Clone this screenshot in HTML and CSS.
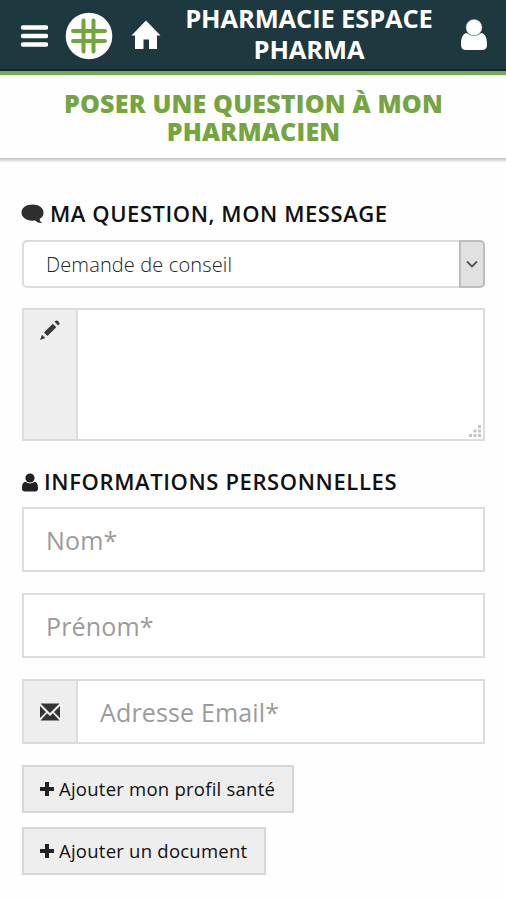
FILE: index.html
```html
<!DOCTYPE html>
<html lang="fr">
<head>
<meta charset="utf-8">
<title>Pharmacie Espace Pharma</title>
<link rel="stylesheet" href="styles.css">
</head>
<body>
<header class="topbar">
  <svg class="menu" viewBox="0 0 28 24"><path d="M3 2.500h23M3 11h23M3 19.500h23" stroke="#fff" stroke-width="4.400" stroke-linecap="round"/></svg>
  <svg class="logo" viewBox="0 0 48 48"><circle cx="24" cy="24" r="23.300" fill="#fff"/><path d="M18.500 8.500v31M28.500 8.500v31M8 19h32M8 29h32" stroke="#72a63c" stroke-width="4" stroke-linecap="round"/></svg>
  <svg class="home" viewBox="0 0 30 30"><path d="M15 0.500L29.500 15.500H26V29H18V19.500H12.500V29H4V15.500H0.500Z" fill="#fff"/></svg>
  <div class="brand">PHARMACIE ESPACE<br>PHARMA</div>
  <svg class="account" viewBox="0 0 26 32"><path d="M5.500 14C1 15 0 20 0 26Q0 31 5 31H21Q26 31 26 26C26 20 25 15 20.500 14Q13 20 5.500 14Z" fill="#fff"/><circle cx="13" cy="8.500" r="8" fill="#fff" stroke="#9aa6aa" stroke-width="0.500"/></svg>
</header>
<h1 class="title">POSER UNE QUESTION À MON<br>PHARMACIEN</h1>
<main class="form">
  <h2 class="section">
    <svg class="bubble" viewBox="0 0 23 20"><path d="M11.500 0.500C18 0.500 22.500 4 22.500 8.500Q22.500 13 18.500 15Q19 18 21.500 19Q17 19.500 14 16.500C6 17.500 0.500 13.500 0.500 8.500C0.500 4 5 0.500 11.500 0.500Z" fill="#2e2e2e"/></svg>
    <span class="message-label">MA QUESTION, MON MESSAGE</span>
  </h2>
  <div class="select"><span>Demande de conseil</span>
    <div class="arrow"><svg viewBox="0 0 12 8"><path d="M1 1.500L6 6.500L11 1.500" fill="none" stroke="#555" stroke-width="1.800"/></svg></div>
  </div>
  <div class="group area">
    <div class="addon"><svg class="pencil" viewBox="0 0 20 20"><path d="M4 12.500L12.800 3.700L16.300 7.200L7.500 16ZM14.500 1.800L16 0.500Q17 0 18.500 1.500T19.500 4L18.200 5.500ZM2 14.700L5.300 18L0 20Z" fill="#3a3a3a"/></svg></div>
    <div class="entry"><svg class="grip" viewBox="0 0 12 12"><path d="M9 0h3v3H9zM9 4.500h3v3H9zM9 9h3v3H9zM4.500 4.500h3v3h-3zM4.500 9h3v3h-3zM0 9h3v3H0z" fill="#c4c4c4"/></svg></div>
  </div>
  <h2 class="section personal">
    <svg class="person" viewBox="0 0 16 19"><path d="M3.500 8.800C0.500 9.500 0 12 0 15.500Q0 18.500 3 18.500H13Q16 18.500 16 15.500C16 12 15.500 9.500 12.500 8.800Q8 12 3.500 8.800Z" fill="#222"/><circle cx="8" cy="5" r="4.600" fill="#222"/></svg>
    <span class="personal-label">INFORMATIONS PERSONNELLES</span>
  </h2>
  <div class="group"><div class="entry"><span class="nom">Nom*</span></div></div>
  <div class="group"><div class="entry"><span class="prenom">Prénom*</span></div></div>
  <div class="group">
    <div class="addon"><svg class="mail" viewBox="0 0 20 18"><path d="M0.500 0.500H19.500L10 10ZM0 3L6 9L0 15ZM20 3L14 9L20 15ZM7 10.200L10 13L13 10.200L19.500 17.500H0.500Z" fill="#333"/></svg></div>
    <div class="entry"><span class="email">Adresse Email*</span></div>
  </div>
  <div class="actions">
    <div class="button profile"><svg viewBox="0 0 14 14"><path d="M7 0v14M0 7h14" stroke="#222" stroke-width="4"/></svg><span>Ajouter mon profil santé</span></div>
    <div class="button document"><svg viewBox="0 0 14 14"><path d="M7 0v14M0 7h14" stroke="#222" stroke-width="4"/></svg><span>Ajouter un document</span></div>
  </div>
</main>
</body>
</html>
```
FILE: styles.css
```css
* { box-sizing: border-box; }
body { margin: 0; height: 900px; overflow: hidden; background: #fefefe; font-family: "Open Sans", sans-serif; color: #111; }
svg { display: block; flex: none; }
h1, h2 { margin: 0; }
span, .brand, .title { white-space: nowrap; }

.topbar { display: flex; align-items: flex-start; height: 75px; padding-left: 20px; background: #1d383f; border-bottom: 4px solid #79a94a; box-shadow: inset 0 -2px #12233a; }
.menu { width: 28px; height: 24px; margin-top: 25px; }
.logo { width: 48px; height: 48px; margin: 12px 0 0 17px; }
.home { width: 30px; height: 30px; margin: 20px 0 0 18px; }
.brand { width: 260px; margin: 3px 0 0 18px; text-align: center; font-size: 25.500px; line-height: 31px; font-weight: 700; letter-spacing: -0.130px; color: #fff; }
.account { width: 26px; height: 32px; margin: 19px 0 0 22px; }

.title { height: 83px; padding: 15px 0 0 1px; text-align: center; font-size: 25px; line-height: 27.500px; font-weight: 800; letter-spacing: 0.180px; color: #74a540; }
.form { padding: 4px 21px 0 22px; background: linear-gradient(#c4c4c4, #fefefe) top / 100% 5px no-repeat; }

.section { display: flex; align-items: center; gap: 6px; height: 30px; padding: 0; font-size: 22px; font-weight: 600; line-height: 30px; letter-spacing: 0.570px; }
.section span { margin-top: -2px; }
.form .section:first-child { height: 78px; padding-top: 25px; }
.form .personal { height: 30px; margin: 26px 0 10px; letter-spacing: 0.620px; }
.bubble { width: 23px; height: 20px; margin-left: -1px; }
.person { width: 16px; height: 19px; }

.select { display: flex; justify-content: space-between; align-items: center; height: 48px; padding-left: 22px; border: 2px solid #dcdcdc; border-radius: 5px; font-size: 20px; font-weight: 300; letter-spacing: 0.130px; color: #222; background: #fff; }
.arrow { display: flex; align-items: center; justify-content: center; width: 26px; height: 48px; margin-right: -2px; border: 2px solid #bdbdbd; border-radius: 0 5px 5px 0; background: #e1e1e1; }
.arrow svg { width: 12px; height: 8px; }

.group { display: flex; height: 65px; margin-bottom: 21px; border: 2px solid #dcdcdc; background: #fff; }
.area { height: 133px; margin-top: 20px; }
.addon { display: flex; align-items: center; justify-content: center; width: 54px; border-right: 2px solid #dcdcdc; background: #eee; }
.area .addon { align-items: flex-start; padding-top: 10px; }
.pencil { width: 20px; height: 20px; }
.mail { width: 20px; height: 18px; }
.entry { display: flex; flex: 1; align-items: center; padding-left: 22px; font-size: 25px; letter-spacing: 0.150px; color: #9b9b9b; }
.area .entry { align-items: flex-end; justify-content: flex-end; padding: 0 2px 2px 0; }
.grip { width: 12px; height: 12px; }

.actions { display: flex; flex-direction: column; align-items: flex-start; gap: 14px; }
.button { display: flex; align-items: center; gap: 5px; height: 48px; padding-left: 16px; border: 2px solid #d6d6d6; background: #eee; font-size: 18.500px; font-weight: 500; letter-spacing: 0.240px; }
.button span { margin-top: -1px; }
.button svg { width: 14px; height: 14px; }
.profile { width: 272px; }
.document { width: 244px; }
```
